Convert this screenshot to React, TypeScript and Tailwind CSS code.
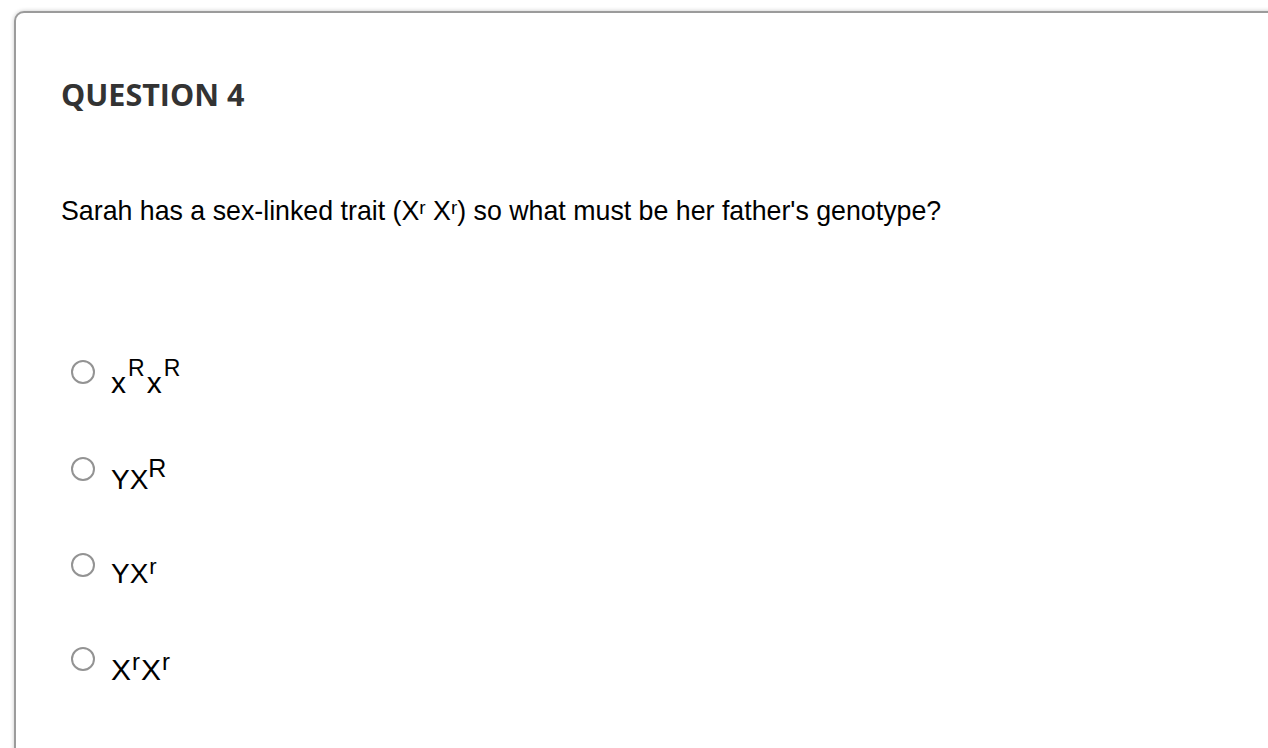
const Radio = () => (
  <div className="h-6 w-6 shrink-0 rounded-full border-2 border-[#939393] bg-white"></div>
);

const Sup = ({ children, size }: { children: string; size: string }) => (
  <span className={`relative ${size}`}>{children}</span>
);

const App = () => {
  return (
    <div className="h-[748px] w-full overflow-hidden bg-white pl-[14px] pt-[11px]">
      <div className="h-[800px] w-[1300px] rounded-tl-[10px] border-2 border-[#9b9b9b] bg-white pl-[45px] pt-[66px] shadow-[0_0_4px_rgba(0,0,0,0.22)]">
        <h2 className="font-['Open_Sans',sans-serif] text-[30.5px] font-bold leading-none text-[#333333]">
          {"QUESTION 4"}
        </h2>
        <div className="mt-[88px] font-['Liberation_Sans',Arial,sans-serif] text-[26.75px] leading-none text-black">
          {"Sarah has a sex-linked trait (X"}
          <span className="relative -top-[6px] text-[19px]">r</span>
          {" X"}
          <span className="relative -top-[6px] text-[19px]">r</span>
          {") so what must be her father's genotype?"}
        </div>
        <div className="mt-[136px] flex flex-col gap-[59px] pl-[10px] font-['Liberation_Sans',Arial,sans-serif] text-[28px] leading-none text-black">
          <div className="flex items-start gap-4">
            <Radio />
            <div className="pt-[8px] text-[30px]">
              {"x"}
              <Sup size="-top-[17px] ml-[2px] text-[23px]">R</Sup>
              <span className="ml-[2px]">{"x"}</span>
              <Sup size="-top-[17px] ml-[2px] text-[23px]">R</Sup>
            </div>
          </div>
          <div className="flex items-start gap-4">
            <Radio />
            <div className="pt-[9px]">
              {"YX"}
              <Sup size="-top-[12px] text-[25px]">R</Sup>
            </div>
          </div>
          <div className="flex items-start gap-4">
            <Radio />
            <div className="pt-[7px]">
              {"YX"}
              <Sup size="-top-[9px] ml-[1px] text-[22px]">r</Sup>
            </div>
          </div>
          <div className="flex items-start gap-4">
            <Radio />
            <div className="pt-[8px] text-[30px]">
              {"X"}
              <Sup size="-top-[10px] ml-[1px] text-[24px]">r</Sup>
              <span className="ml-[1px]">{"X"}</span>
              <Sup size="-top-[10px] ml-[1px] text-[24px]">r</Sup>
            </div>
          </div>
        </div>
      </div>
    </div>
  );
};

export default App;
